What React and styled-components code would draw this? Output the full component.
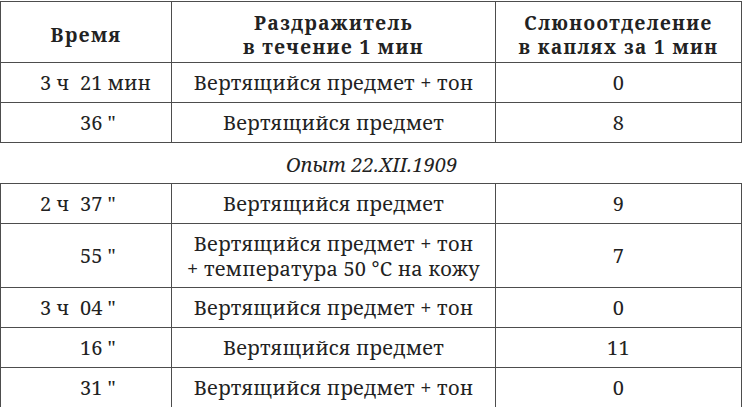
import React from 'react'
import styled, { createGlobalStyle } from 'styled-components'

const GlobalStyle = createGlobalStyle`
  html, body {
    margin: 0;
    padding: 0;
    background: #fff;
  }
  body {
    font-family: 'Noto Serif', 'DejaVu Serif', serif;
    color: #222;
  }
`

const Page = styled.div`
  width: 743px;
  padding-top: 1px;
`

const Table = styled.table`
  width: 742px;
  border-collapse: collapse;
  table-layout: fixed;
  font-family: 'Noto Serif', 'DejaVu Serif', serif;
  font-size: 20px;
  letter-spacing: 0.2px;
  line-height: 25px;
  color: #222;

  td, th {
    border: 1.5px solid #4d4d4d;
    text-align: center;
    vertical-align: middle;
    padding: 0;
  }
`

const HeadCell = styled.th`
  height: 61px;
  box-sizing: border-box;
  padding-top: 5px !important;
  font-weight: bold;
  letter-spacing: 1.4px;
  font-size: 19px;
  line-height: 24px;
`

const Cell = styled.td`
  height: ${p => (p.$tall ? 63 : 39)}px;
`

const TimeBox = styled.div`
  display: flex;
  padding-left: 39px;
  text-align: left;
  white-space: pre;
  letter-spacing: 0;
`

const Hour = styled.span`
  width: 40px;
`

const Caption = styled.div`
  height: 40px;
  display: flex;
  align-items: center;
  justify-content: center;
  font-style: italic;
  font-size: 20px;
  letter-spacing: 0.1px;
  padding-top: 2px;
  box-sizing: border-box;
`

const cols = (
  <colgroup>
    <col style={{ width: 171 }} />
    <col style={{ width: 324 }} />
    <col />
  </colgroup>
)

const first = [
  { h: '3 ч', m: '21 мин', s: 'Вертящийся предмет + тон', v: '0' },
  { h: '', m: '36 "', s: 'Вертящийся предмет', v: '8' },
]

const second = [
  { h: '2 ч', m: '37 "', s: 'Вертящийся предмет', v: '9' },
  { h: '', m: '55 "', s: ['Вертящийся предмет + тон', '+ температура 50 °C на кожу'], v: '7' },
  { h: '3 ч', m: '04 "', s: 'Вертящийся предмет + тон', v: '0' },
  { h: '', m: '16 "', s: 'Вертящийся предмет', v: '11' },
  { h: '', m: '31 "', s: 'Вертящийся предмет + тон', v: '0' },
]

const Row = ({ r }) => {
  const tall = Array.isArray(r.s)
  return (
    <tr>
      <Cell $tall={tall}>
        <TimeBox>
          <Hour>{r.h}</Hour>
          <span>{r.m}</span>
        </TimeBox>
      </Cell>
      <Cell $tall={tall}>
        {tall ? r.s.map((l, i) => <div key={i}>{l}</div>) : r.s}
      </Cell>
      <Cell $tall={tall}>{r.v}</Cell>
    </tr>
  )
}

export default function App() {
  return (
    <Page>
      <GlobalStyle />
      <Table>
        {cols}
        <thead>
          <tr>
            <HeadCell>Время</HeadCell>
            <HeadCell>
              Раздражитель
              <br />в течение 1 мин
            </HeadCell>
            <HeadCell>
              Слюноотделение
              <br />в каплях за 1 мин
            </HeadCell>
          </tr>
        </thead>
        <tbody>
          {first.map((r, i) => (
            <Row key={i} r={r} />
          ))}
        </tbody>
      </Table>
      <Caption>Опыт 22.XII.1909</Caption>
      <Table>
        {cols}
        <tbody>
          {second.map((r, i) => (
            <Row key={i} r={r} />
          ))}
        </tbody>
      </Table>
    </Page>
  )
}
